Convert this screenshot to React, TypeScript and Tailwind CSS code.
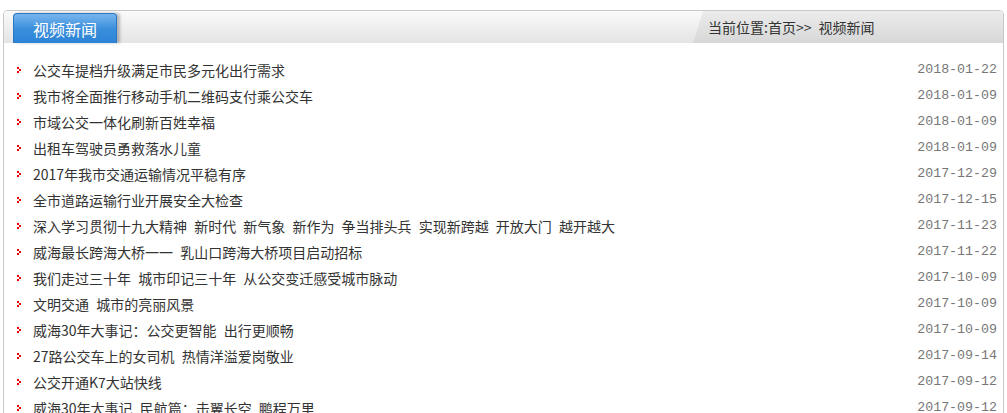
const news = [
  { title: "公交车提档升级满足市民多元化出行需求", date: "2018-01-22" },
  { title: "我市将全面推行移动手机二维码支付乘公交车", date: "2018-01-09" },
  { title: "市域公交一体化刷新百姓幸福", date: "2018-01-09" },
  { title: "出租车驾驶员勇救落水儿童", date: "2018-01-09" },
  { title: "2017年我市交通运输情况平稳有序", date: "2017-12-29" },
  { title: "全市道路运输行业开展安全大检查", date: "2017-12-15" },
  { title: "深入学习贯彻十九大精神 新时代 新气象 新作为 争当排头兵 实现新跨越 开放大门 越开越大", date: "2017-11-23" },
  { title: "威海最长跨海大桥一一 乳山口跨海大桥项目启动招标", date: "2017-11-22" },
  { title: "我们走过三十年 城市印记三十年 从公交变迁感受城市脉动", date: "2017-10-09" },
  { title: "文明交通 城市的亮丽风景", date: "2017-10-09" },
  { title: "威海30年大事记：公交更智能 出行更顺畅", date: "2017-10-09" },
  { title: "27路公交车上的女司机 热情洋溢爱岗敬业", date: "2017-09-14" },
  { title: "公交开通K7大站快线", date: "2017-09-12" },
  { title: "威海30年大事记 民航篇：击翼长空 鹏程万里", date: "2017-09-12" },
];

const Bullet = () => (
  <svg width="4" height="6" viewBox="0 0 4 6" className="shrink-0">
    <rect x="0" y="0" width="2" height="2" fill="#e60000" />
    <rect x="2" y="2" width="2" height="2" fill="#e60000" />
    <rect x="0" y="4" width="2" height="2" fill="#e60000" />
  </svg>
);

export default function App() {
  return (
    <div className="h-[413px] overflow-hidden bg-white pt-[10px] pl-[3px] pr-[3px] font-['Noto_Sans_CJK_SC','Noto_Sans',sans-serif]">
      <div className="rounded-t-[5px] border border-b-0 border-[#c8c8c8]">
        <div className="relative flex h-[32px] items-end justify-between rounded-t-[4px] bg-gradient-to-b from-[#fafafa] to-[#e4e4e4]">
          <div className="relative ml-[9px] flex h-[30px] w-[104px] items-center justify-center rounded-t-[4px] border border-b-0 border-[#2a78c4] bg-gradient-to-b from-[#78b6ee] via-[#3b8fdc] to-[#2c83d6] text-[16px] text-white shadow-[3px_0_3px_rgba(0,0,0,0.25)]">
            视频新闻
          </div>
          <div className="flex h-[32px] w-[310px] items-center rounded-tr-[4px] bg-gradient-to-b from-[#ececec] to-[#d7d7d7] pl-[15px] text-[14px] text-[#333] [word-spacing:4px] [clip-path:polygon(10px_0,100%_0,100%_100%,0_100%)]">
            当前位置:首页&gt;&gt; 视频新闻
          </div>
        </div>
        <ul className="pt-[14px]">
          {news.map((n, i) => (
            <li key={i} className="flex h-[26px] items-center pl-[13px] pr-[6px]">
              <Bullet />
              <span className="ml-[12px] flex-1 truncate text-[14px] leading-[26px] text-[#333] [word-spacing:4px]">{n.title}</span>
              <span className="font-['Liberation_Mono',monospace] text-[13.3px] leading-[26px] text-[#777]">{n.date}</span>
            </li>
          ))}
        </ul>
      </div>
    </div>
  );
}
